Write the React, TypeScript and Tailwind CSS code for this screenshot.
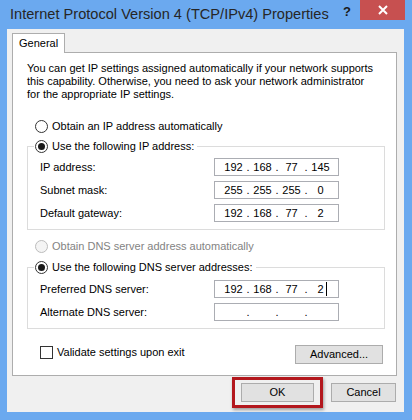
import React from "react";

const font = { fontFamily: '"Liberation Sans", Arial, sans-serif' };

function Radio({ checked, disabled }: { checked?: boolean; disabled?: boolean }) {
  return (
    <span
      className={
        "flex h-[13px] w-[13px] items-center justify-center rounded-full border " +
        (disabled ? "border-[#bcbcbc] bg-[#f4f4f4]" : "border-[#333333] bg-white")
      }
    >
      {checked && <span className="h-[7px] w-[7px] rounded-full bg-[#1a1a1a]" />}
    </span>
  );
}

function IpBox({ parts, caret }: { parts: string[]; caret?: boolean }) {
  return (
    <div className="flex h-[18px] w-[125px] items-center border border-[#abadb3] bg-white pl-[7px] text-[11px] text-[#000]">
      {parts.map((p, i) => (
        <React.Fragment key={i}>
          <span className="relative w-[23px] text-center leading-[14px]">
            {p}
            {caret && i === 3 && (
              <span className="absolute right-[5px] top-[0px] h-[14px] w-[1px] bg-black" />
            )}
          </span>
          {i < 3 && <span className="w-[6px] text-center leading-[14px]">.</span>}
        </React.Fragment>
      ))}
    </div>
  );
}

function Row({ label, parts, caret }: { label: string; parts: string[]; caret?: boolean }) {
  return (
    <div className="flex items-center">
      <span className="w-[174px] text-[11px]">{label}</span>
      <IpBox parts={parts} caret={caret} />
    </div>
  );
}

function Button({ children, className = "" }: { children: React.ReactNode; className?: string }) {
  return (
    <div
      className={
        "flex h-[19px] items-center justify-center border border-[#acacac] bg-[#e1e1e1] text-[11px] text-black " +
        className
      }
    >
      {children}
    </div>
  );
}

export default function App() {
  return (
    <div className="flex h-[420px] w-[412px] flex-col bg-[#6ba9ef]" style={font}>
      {/* title bar */}
      <div className="flex h-[29px] shrink-0 items-start">
        <div className="pl-[10px] pt-[4px] text-[14.6px] leading-[20px] text-[#262626]">
          Internet Protocol Version 4 (TCP/IPv4) Properties
        </div>
        <div className="flex-1" />
        <div className="pt-[2px] pr-[9px] text-[13px] font-bold text-[#1a1a1a]">?</div>
        <div className="mr-[7px] flex h-[20px] w-[45px] items-center justify-center bg-[#c75050]">
          <svg width="10" height="10" viewBox="0 0 10 10">
            <path d="M1 1 L9 9 M9 1 L1 9" stroke="white" strokeWidth="2" />
          </svg>
        </div>
      </div>

      {/* client */}
      <div className="ml-[7px] mr-[8px] flex h-[383px] flex-col bg-[#f0f0f0] px-[5px] pt-[4px]">
        {/* tab */}
        <div className="flex">
          <div className="relative z-10 -mb-[1px] flex h-[20px] w-[53px] items-center border border-b-0 border-[#adadad] bg-white pl-[6px] text-[11px] text-black">
            General
          </div>
        </div>
        {/* panel */}
        <div className="flex w-[385px] flex-col border border-[#adadad] bg-white pl-[14px] pr-[11px] pt-[9px] pb-[11px] text-[11px] text-black">
          <p className="leading-[13px]">
            You can get IP settings assigned automatically if your network supports
            <br />
            this capability. Otherwise, you need to ask your network administrator
            <br />
            for the appropriate IP settings.
          </p>

          <div className="ml-[8px] mt-[17px] flex h-[16px] items-center gap-[4px]">
            <Radio />
            <span>Obtain an IP address automatically</span>
          </div>

          <fieldset className="mt-[4px] w-[358px] border border-[#dcdcdc] px-[12px] pb-[7px]">
            <legend className="-ml-[6px] flex h-[16px] items-center gap-[4px] pl-[1px] pr-[3px]">
              <Radio checked />
              <span>Use the following IP address:</span>
            </legend>
            <div className="mt-[4px] flex flex-col gap-[5px]">
              <Row label="IP address:" parts={["192", "168", "77", "145"]} />
              <Row label="Subnet mask:" parts={["255", "255", "255", "0"]} />
              <Row label="Default gateway:" parts={["192", "168", "77", "2"]} />
            </div>
          </fieldset>

          <div className="ml-[8px] mt-[8px] flex h-[16px] items-center gap-[4px] text-[#838383]">
            <Radio disabled />
            <span>Obtain DNS server address automatically</span>
          </div>

          <fieldset className="mt-[5px] w-[358px] border border-[#dcdcdc] px-[12px] pb-[7px]">
            <legend className="-ml-[6px] flex h-[16px] items-center gap-[4px] pl-[1px] pr-[3px]">
              <Radio checked />
              <span>Use the following DNS server addresses:</span>
            </legend>
            <div className="mt-[5px] flex flex-col gap-[5px]">
              <Row label="Preferred DNS server:" parts={["192", "168", "77", "2"]} caret />
              <Row label="Alternate DNS server:" parts={["", "", "", ""]} />
            </div>
          </fieldset>

          <div className="mt-[15px] flex items-start">
            <div className="ml-[13px] mt-[0px] flex items-center gap-[4px]">
              <span className="h-[13px] w-[13px] border border-[#333333] bg-white" />
              <span>Validate settings upon exit</span>
            </div>
            <div className="flex-1" />
            <Button className="mr-[2px] mt-[1px] w-[88px]">Advanced...</Button>
          </div>
        </div>

        {/* bottom buttons */}
        <div className="mt-[7px] flex justify-end pr-[3px]">
          <div className="relative">
            <Button className="w-[73px] border-[#3c7fb1]">OK</Button>
            <div className="absolute -left-[9px] -right-[9px] -top-[6px] -bottom-[6px] border-[3px] border-[#b3171d] shadow-[1px_2px_3px_rgba(0,0,0,0.35)]" />
          </div>
          <Button className="ml-[17px] w-[65px]">Cancel</Button>
        </div>
      </div>
    </div>
  );
}
